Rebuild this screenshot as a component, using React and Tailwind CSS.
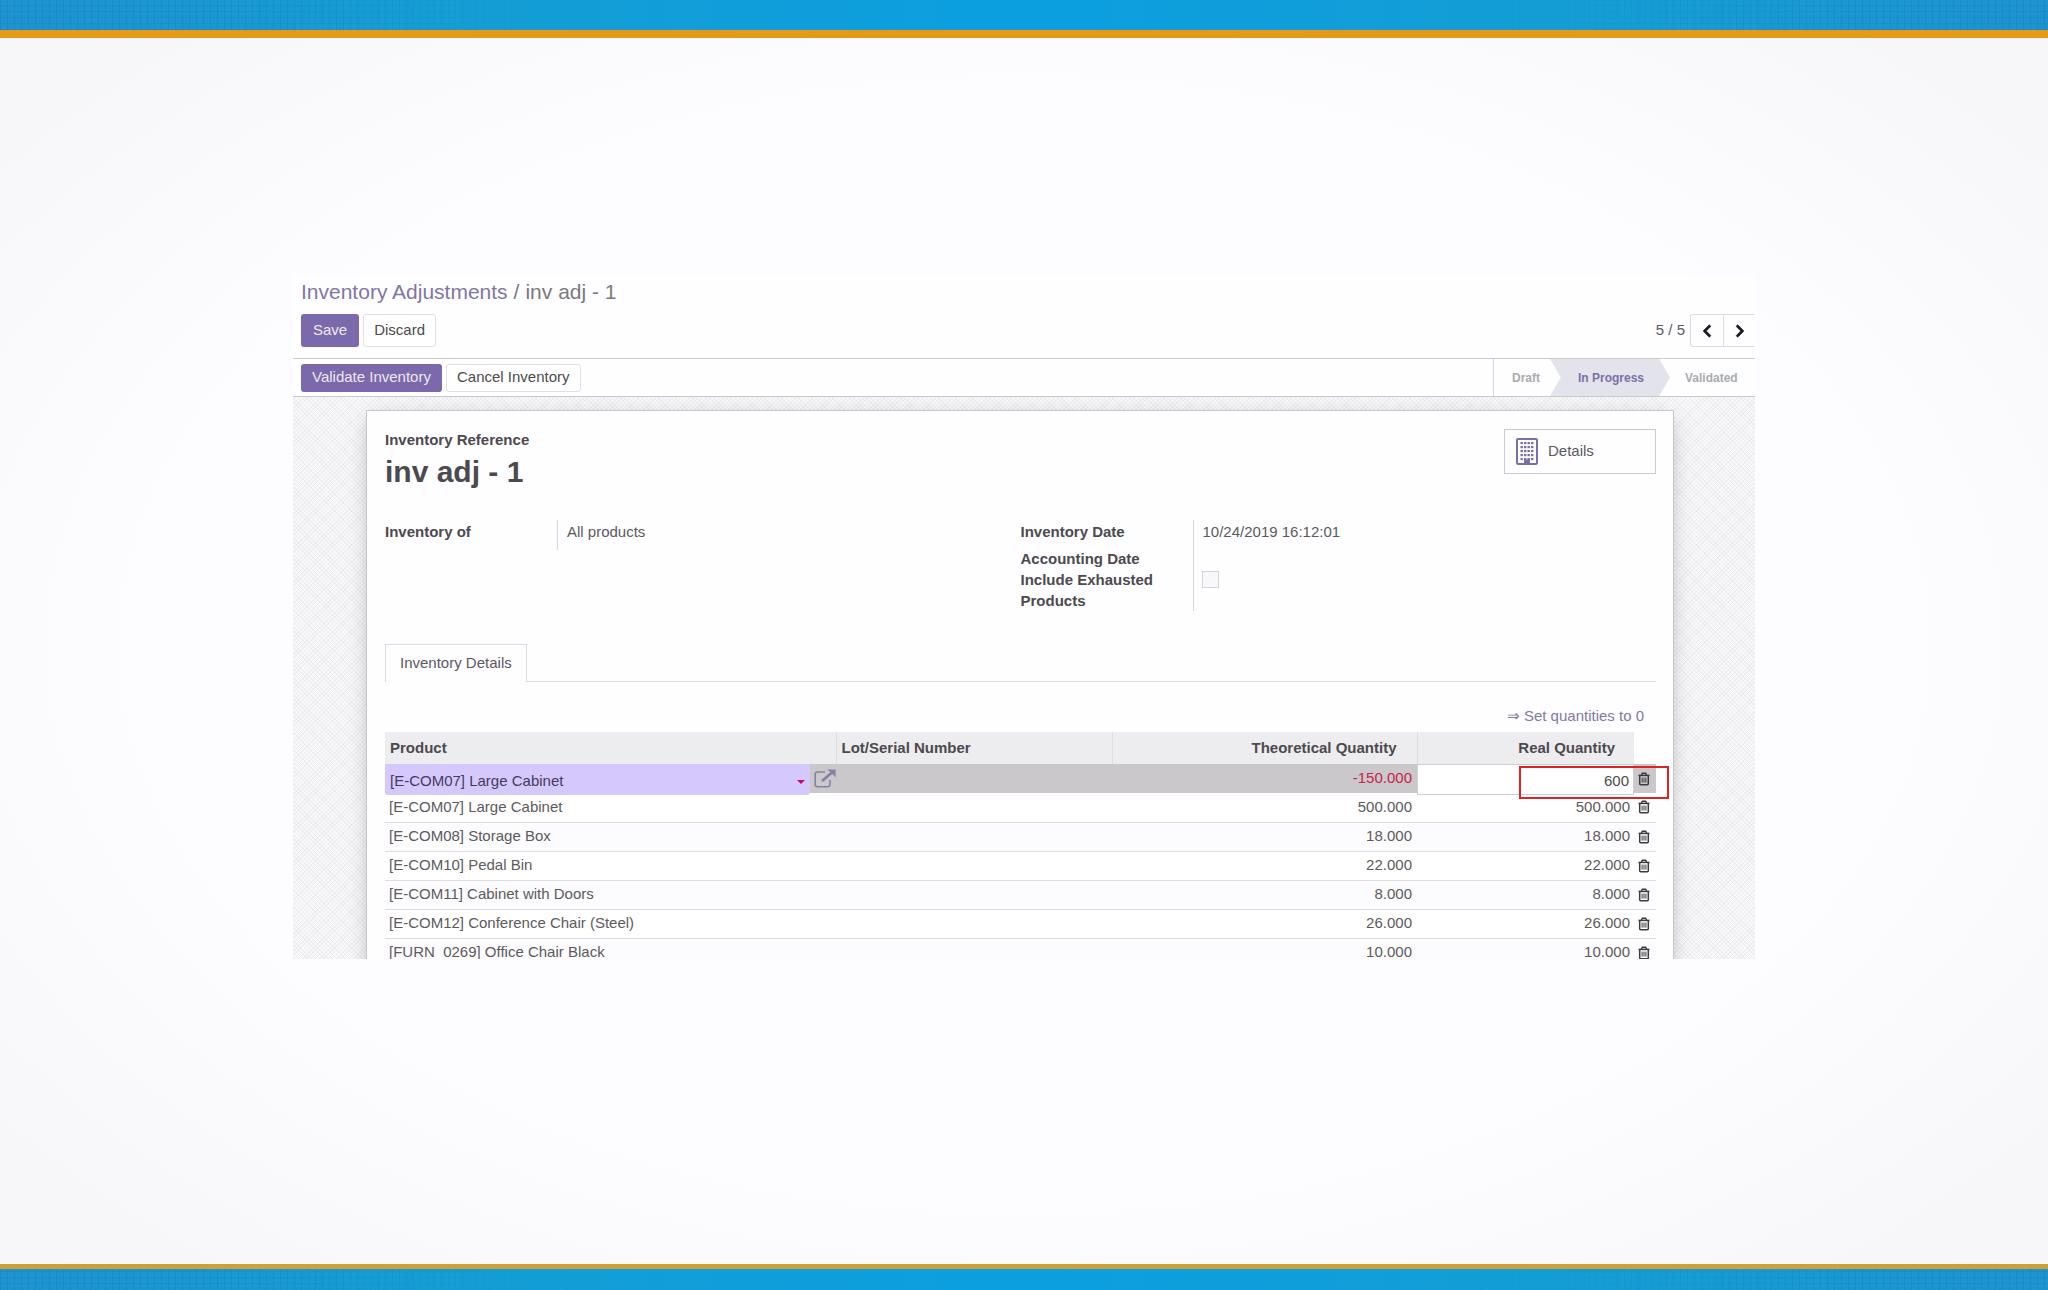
import { FaChevronLeft, FaChevronRight } from 'react-icons/fa'

const rows = [
  { product: '[E-COM07] Large Cabinet', theoretical: '500.000', real: '500.000' },
  { product: '[E-COM08] Storage Box', theoretical: '18.000', real: '18.000' },
  { product: '[E-COM10] Pedal Bin', theoretical: '22.000', real: '22.000' },
  { product: '[E-COM11] Cabinet with Doors', theoretical: '8.000', real: '8.000' },
  { product: '[E-COM12] Conference Chair (Steel)', theoretical: '26.000', real: '26.000' },
  { product: '[FURN_0269] Office Chair Black', theoretical: '10.000', real: '10.000' },
]

function TrashIcon() {
  return (
    <svg viewBox="0 0 12 14" className="h-[14px] w-3" fill="none" stroke="currentColor" aria-hidden="true">
      <path d="M0.5 3.4h11" strokeWidth="1.5" />
      <path d="M3.4 3.2L4.3 1.2h3.4l0.9 2" strokeWidth="1.4" />
      <path d="M1.7 3.5v8.3q0 1 1 1h6.6q1 0 1-1V3.5" strokeWidth="1.5" />
      <path d="M4.1 5.6v5M6 5.6v5M7.9 5.6v5" strokeWidth="1" />
    </svg>
  )
}

function BuildingIcon() {
  const ys = [5, 9, 13, 17, 21]
  const xs = [4.5, 8, 11.5, 15]
  return (
    <svg viewBox="0 0 22 27" className="h-[27px] w-[22px] text-[#7c6fa8]" aria-hidden="true">
      <rect x="1" y="1" width="20" height="25" rx="1" fill="#fff" stroke="currentColor" strokeWidth="2" />
      {ys.map((y) =>
        xs.map((x) => <rect key={`${x}-${y}`} x={x} y={y - 1} width="2.4" height="2.2" fill="currentColor" />),
      )}
      <path d="M8 26v-4.5h6V26z" fill="currentColor" />
    </svg>
  )
}

function ExternalIcon() {
  return (
    <svg viewBox="0 0 22 19" className="h-[19px] w-[22px]" fill="none" stroke="currentColor" aria-hidden="true">
      <path d="M11 3H3.5Q1.2 3 1.2 5.2v10.3q0 2.2 2.3 2.2h10.2q2.3 0 2.3-2.2V11" strokeWidth="1.6" />
      <path d="M8 12L18 3.4" strokeWidth="2.6" />
      <path d="M13.5 0.4H21.6V8.2z" fill="currentColor" stroke="none" />
    </svg>
  )
}

function Band({ className }) {
  return (
    <div
      className={`bg-[#129dda] bg-[linear-gradient(90deg,#1e93cf_0%,#159dd4_22%,#0b9fe0_50%,#159dd4_78%,#1e93cf_100%)] ${className}`}
    >
      <div className="h-full bg-[repeating-linear-gradient(90deg,#0a6fa833_0px,#0a6fa833_1px,transparent_1px,transparent_7px),repeating-linear-gradient(0deg,#0a6fa826_0px,#0a6fa826_1px,transparent_1px,transparent_6px)] mask-[linear-gradient(90deg,#000_0%,#000_12%,transparent_28%,transparent_72%,#000_90%)]" />
    </div>
  )
}

function Breadcrumb() {
  return (
    <nav className="flex h-[34px] items-center gap-[6px] px-2 text-[21px] text-[#7b797d]">
      <a href="#adjustments" className="text-[#8276a4]">Inventory Adjustments</a>
      <span>/</span>
      <span>inv adj - 1</span>
    </nav>
  )
}

function ControlPanel() {
  return (
    <div className="flex items-center justify-between pb-[11px] pl-2 pt-[5px]">
      <div className="flex gap-1">
        <button className="h-[33px] rounded-[3px] bg-[#7c69ab] px-3 text-[#ece8f6]">Save</button>
        <button className="h-[33px] rounded-[3px] border border-[#e2e0e4] bg-white px-[10px]">Discard</button>
      </div>
      <div className="flex items-center gap-[5px]">
        <span className="text-[#5c5a5e]">5 / 5</span>
        <div className="flex h-[33px] rounded-l-[3px] border border-r-0 border-[#dedce1] text-[#1c1c1c]">
          <button aria-label="Previous" className="flex w-[33px] items-center justify-center border-r border-[#dedce1]">
            <FaChevronLeft className="size-[14px]" stroke="currentColor" strokeWidth="30" />
          </button>
          <button aria-label="Next" className="flex w-[31px] items-center justify-center">
            <FaChevronRight className="size-[14px]" stroke="currentColor" strokeWidth="30" />
          </button>
        </div>
      </div>
    </div>
  )
}

function StatusBar() {
  return (
    <div className="flex h-[39px] items-stretch justify-between border-y border-[#cbc9ce] pl-2">
      <div className="flex items-center gap-1">
        <button className="h-7 rounded-[3px] bg-[#7c69ab] px-[11px] text-[#ece8f6]">Validate Inventory</button>
        <button className="h-7 rounded-[3px] border border-[#e2e0e4] bg-white px-[10px]">Cancel Inventory</button>
      </div>
      <ol className="flex items-stretch border-l border-[#d9d7dc] text-[12px] font-bold text-[#a9acb1]">
        <li className="flex w-14 items-center justify-end pr-[10px]">Draft</li>
        <li className="flex w-[120px] items-center justify-center bg-[#e3e3eb] pl-[2px] text-[#7c6fa8] [clip-path:polygon(0_0,91%_0,100%_50%,91%_100%,0_100%,9%_50%)]">
          In Progress
        </li>
        <li className="flex w-[85px] items-center pl-[15px]">Validated</li>
      </ol>
    </div>
  )
}

function SheetHeader() {
  return (
    <div className="flex items-start justify-between">
      <div>
        <div className="font-bold leading-[22px]">Inventory Reference</div>
        <h1 className="text-[30px] font-bold leading-[42px]">inv adj - 1</h1>
      </div>
      <button className="flex h-[45px] w-[152px] items-center gap-[10px] border border-[#cccad0] pl-[11px] text-[#5c5a5e]">
        <BuildingIcon />
        Details
      </button>
    </div>
  )
}

function FieldGroups() {
  return (
    <div className="mt-[27px] grid h-[90px] grid-cols-2 items-start leading-[21px]">
      <dl className="grid h-[30px] grid-cols-[172px_1fr]">
        <dt className="pt-px font-bold">Inventory of</dt>
        <dd className="border-l border-[#d9d7dc] pl-[9px] pt-px text-[#5c5a5e]">All products</dd>
      </dl>
      <div className="grid h-[90px] grid-cols-[172px_1fr]">
        <div className="flex flex-col pt-px font-bold">
          <span className="h-[27px]">Inventory Date</span>
          <span className="h-[21px]">Accounting Date</span>
          <label htmlFor="exhausted" className="w-[150px]">Include Exhausted Products</label>
        </div>
        <div className="border-l border-[#d9d7dc] pt-px text-[#5c5a5e]">
          <div className="h-[50px] pl-[9px]">10/24/2019 16:12:01</div>
          <input
            id="exhausted"
            type="checkbox"
            className="ml-2 block size-[17px] appearance-none border border-[#d5d3da] bg-[#f8f7fa]"
          />
        </div>
      </div>
    </div>
  )
}

function InventoryTable() {
  return (
    <table className="w-full table-fixed border-collapse">
      <colgroup>
        <col className="w-[451px]" />
        <col className="w-[276px]" />
        <col />
        <col className="w-[217px]" />
        <col className="w-[22px]" />
      </colgroup>
      <thead>
        <tr className="h-8 text-left [&>th]:bg-[#edecee]">
          <th className="pl-[5px]">Product</th>
          <th className="border-l border-[#dfdde1] pl-[5px]">Lot/Serial Number</th>
          <th className="border-l border-[#dfdde1] pr-5 text-right">Theoretical Quantity</th>
          <th className="border-l border-[#dfdde1] pr-[19px] text-right">Real Quantity</th>
          <td />
        </tr>
      </thead>
      <tbody className="text-[#5c5a5e]">
        <tr className="h-[29px] bg-[#cac8cb]">
          <td className="p-0 align-top">
            <div className="flex h-[29px] items-start">
              <div className="relative h-[31px] flex-1">
                <input
                  aria-label="Product"
                  defaultValue="[E-COM07] Large Cabinet"
                  className="block h-[31px] w-full rounded-b-[3px] bg-[#d5c8fd] pl-[5px] pt-[2px] text-[#453a5c]"
                />
                <span className="absolute right-[5px] top-4 border-x-4 border-t-4 border-x-transparent border-t-[#c00a78]" />
              </div>
              <button aria-label="Open product" className="flex h-7 w-[26px] items-center justify-end text-[#8680a4]">
                <ExternalIcon />
              </button>
            </div>
          </td>
          <td />
          <td className="pr-[5px] text-right text-[#c62350]">-150.000</td>
          <td className="p-0 align-top">
            <div className="relative h-[29px]">
              <input
                aria-label="Real Quantity"
                defaultValue="600"
                className="block h-[31px] w-full border border-[#d0ced2] bg-white pr-1 pt-[2px] text-right text-[#4c4a4e]"
              />
              <span className="pointer-events-none absolute -right-[35px] top-[2px] h-[33px] w-[150px] border-2 border-[#dc2222]" />
            </div>
          </td>
          <td className="pl-1 text-[#3c3a3e]">
            <button aria-label="Delete line" className="block"><TrashIcon /></button>
          </td>
        </tr>
        {rows.map((row) => (
          <tr key={row.product} className="h-[29px] border-b border-[#dedce1] even:bg-white odd:bg-[#fcfbfd]">
            <td className="pl-1">{row.product}</td>
            <td />
            <td className="pr-[5px] text-right">{row.theoretical}</td>
            <td className="pr-1 text-right">{row.real}</td>
            <td className="pl-1 text-[#3c3a3e]">
              <button aria-label="Delete line" className="block"><TrashIcon /></button>
            </td>
          </tr>
        ))}
      </tbody>
    </table>
  )
}

export default function App() {
  return (
    <div className="flex min-h-screen flex-col bg-[radial-gradient(ellipse_at_center,#fdfcfe_0%,#fdfcfe_60%,#f7f6f9_90%)] font-['Liberation_Sans',Arial,sans-serif] text-[15px] text-[#4c4a4e]">
      <Band className="h-[30px]" />
      <div className="h-2 bg-[#e69a17]" />
      <main className="flex-1 px-[293px] pt-[237px]">
        <section className="h-[684px] overflow-hidden bg-[#fefdff]">
          <Breadcrumb />
          <ControlPanel />
          <StatusBar />
          <div className="bg-[#f9f8fa] bg-[repeating-linear-gradient(45deg,#d5d3d840_0px,#d5d3d840_1px,transparent_1px,transparent_3px),repeating-linear-gradient(-45deg,#d5d3d840_0px,#d5d3d840_1px,transparent_1px,transparent_3px)] pl-[73px] pr-[81px] pt-[13px]">
            <div className="border border-[#c8c6cb] bg-[#fefdff] pl-[18px] pr-[17px] pb-10 pt-[18px] shadow-[0_5px_20px_-6px_#00000059]">
              <SheetHeader />
              <FieldGroups />
              <div role="tablist" className="mt-[34px] flex border-b border-[#dddbe0]">
                <button
                  role="tab"
                  aria-selected="true"
                  className="-mb-px h-[38px] border border-b-0 border-[#dddbe0] bg-[#fefdff] px-[14px] text-[#5c5a5e]"
                >
                  Inventory Details
                </button>
              </div>
              <div className="flex h-[50px] items-end justify-end pb-[5px] pr-3">
                <button className="text-[#837a9f]">⇒ Set quantities to 0</button>
              </div>
              <InventoryTable />
            </div>
          </div>
        </section>
      </main>
      <div className="h-[5px] bg-[#cf9f3a]" />
      <Band className="h-[21px]" />
    </div>
  )
}
